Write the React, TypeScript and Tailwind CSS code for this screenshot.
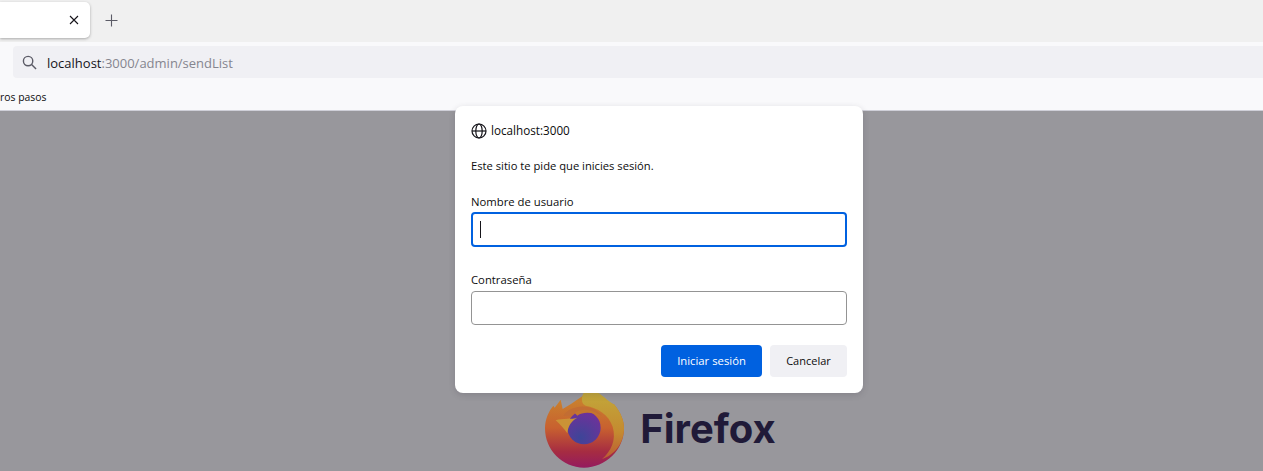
import React from "react";

const font = { fontFamily: '"Open Sans", "Noto Sans", sans-serif' };

function Logo() {
  return (
    <svg width="82" height="80" viewBox="40 18 246 240" className="shrink-0">
      <defs>
        <linearGradient id="body" x1="0.5" y1="0" x2="0.5" y2="1">
          <stop offset="0" stopColor="#c9862e" />
          <stop offset="0.45" stopColor="#c8612f" />
          <stop offset="0.78" stopColor="#a62c42" />
          <stop offset="1" stopColor="#941b5f" />
        </linearGradient>
        <linearGradient id="flame" x1="0.5" y1="0" x2="0.5" y2="1">
          <stop offset="0" stopColor="#c2a83a" />
          <stop offset="0.6" stopColor="#c48a30" />
          <stop offset="1" stopColor="#bb5a33" />
        </linearGradient>
        <radialGradient id="globe" cx="0.4" cy="0.8" r="0.85">
          <stop offset="0" stopColor="#3d4598" />
          <stop offset="1" stopColor="#72309a" />
        </radialGradient>
      </defs>
      <path d="M160 248C95 248 43 195 43 130C43 103 54 78 68 62L72 68L90 44L96 72L122 56L160 30L250 58C272 85 280 108 280 130C280 195 225 248 160 248Z" fill="url(#body)" />
      <path d="M160 22L200 22C222 36 240 55 250 58C272 85 280 108 280 130C280 175 250 212 214 222C240 200 258 165 246 125C234 88 200 68 165 62C152 58 150 38 160 22Z" fill="url(#flame)" />
      <path d="M98 92C118 62 180 50 214 92C190 80 165 82 148 96Z" fill="#c26d33" />
      <circle cx="160" cy="128" r="50" fill="url(#globe)" />
      <path d="M75 106C95 98 125 104 140 98C122 108 112 122 110 145C100 130 88 118 75 106Z" fill="#cb9336" />
      <path d="M132 84C152 68 192 72 212 98C192 82 160 78 140 92Z" fill="#c4762f" />
    </svg>
  );
}

function Field({ label, focused }: { label: string; focused?: boolean }) {
  return (
    <div className="flex flex-col">
      <label className="h-[19px] text-[11.3px] leading-[19px] text-[#0c0c0d]">{label}</label>
      <div
        className={
          focused
            ? "mt-[1px] flex h-[35px] items-center rounded-[4px] border-2 border-[#0061e0] bg-white pl-[7px]"
            : "mt-[2px] h-[34px] rounded-[4px] border border-[#949494] bg-white"
        }
      >
        {focused && <div className="h-[17px] w-px bg-[#15141a]" />}
      </div>
    </div>
  );
}

export default function App() {
  return (
    <div className="relative flex h-[471px] w-[1263px] flex-col overflow-hidden bg-[#98979c]" style={font}>
      <header className="flex h-[42px] items-start bg-[#f0f0f0]">
        <div className="mt-[2px] flex h-[36px] w-[90px] items-center justify-end rounded-r-[5px] bg-white pr-[10px] shadow-[0_1px_3px_rgba(0,0,0,0.3)]">
          <svg width="12" height="12" viewBox="0 0 12 12" stroke="#15141a" strokeWidth="1.1" fill="none">
            <path d="M2 2L10 10M10 2L2 10" />
          </svg>
        </div>
        <div className="ml-[15px] mt-[14px]">
          <svg width="13" height="13" viewBox="0 0 13 13" stroke="#5b5b66" strokeWidth="1.1" fill="none">
            <path d="M6.5 0.5V12.5M0.5 6.5H12.5" />
          </svg>
        </div>
      </header>

      <div className="flex h-[46px] items-start bg-[#f9f9fb] pl-[13px] pt-[4px]">
        <div className="flex h-[32px] flex-1 items-center rounded-l-[4px] bg-[#f0f0f4] pl-[9px]">
          <svg width="15" height="15" viewBox="0 0 16 16" stroke="#5b5b66" strokeWidth="1.5" fill="none">
            <circle cx="6.5" cy="6.5" r="5" />
            <path d="M10.2 10.2L15 15" />
          </svg>
          <span className="ml-[10px] mt-[3px] whitespace-nowrap text-[13px] text-[#85858f]">
            <span className="text-[#15141a]">localhost</span>:3000/admin/sendList
          </span>
        </div>
      </div>

      <div className="flex h-[23px] items-start overflow-hidden border-b border-[#cfcfd8] bg-[#f9f9fb]">
        <span className="whitespace-nowrap text-[10.4px] leading-[18px] text-[#0c0c0d]">ros pasos</span>
      </div>

      <main className="flex flex-1 items-start justify-center pl-[57px] pt-[280px]">
        <div className="flex items-center gap-[14px]">
          <Logo />
          <span className="mb-[4px] text-[40px] font-bold leading-none text-[#201a38]" style={{ fontFamily: "Inter, sans-serif" }}>
            Firefox
          </span>
        </div>
      </main>

      <div className="absolute left-[455px] top-[106px] flex h-[287px] w-[408px] flex-col rounded-[8px] bg-white px-[16px] pt-[16px] shadow-[0_2px_6px_rgba(58,57,68,0.2)]">
        <div className="flex h-[17px] items-center gap-[4px]">
          <svg width="16" height="16" viewBox="0 0 16 16" stroke="#15141a" strokeWidth="1.2" fill="none">
            <circle cx="8" cy="8" r="7" />
            <ellipse cx="8" cy="8" rx="3.2" ry="7" />
            <path d="M1 8H15" />
          </svg>
          <span className="text-[11.7px] text-[#0c0c0d]">localhost:3000</span>
        </div>
        <p className="mt-[18px] h-[17px] text-[11.2px] leading-[17px] text-[#0c0c0d]">Este sitio te pide que inicies sesión.</p>
        <div className="mt-[18px]">
          <Field label="Nombre de usuario" focused />
        </div>
        <div className="mt-[23px]">
          <Field label="Contraseña" />
        </div>
        <div className="mt-[20px] flex justify-end gap-[8px]">
          <button className="h-[32px] w-[101px] rounded-[4px] bg-[#0061e0] text-[11.3px] text-white">Iniciar sesión</button>
          <button className="h-[32px] w-[77px] rounded-[4px] bg-[#f0f0f4] text-[11px] text-[#0c0c0d]">Cancelar</button>
        </div>
      </div>
    </div>
  );
}
